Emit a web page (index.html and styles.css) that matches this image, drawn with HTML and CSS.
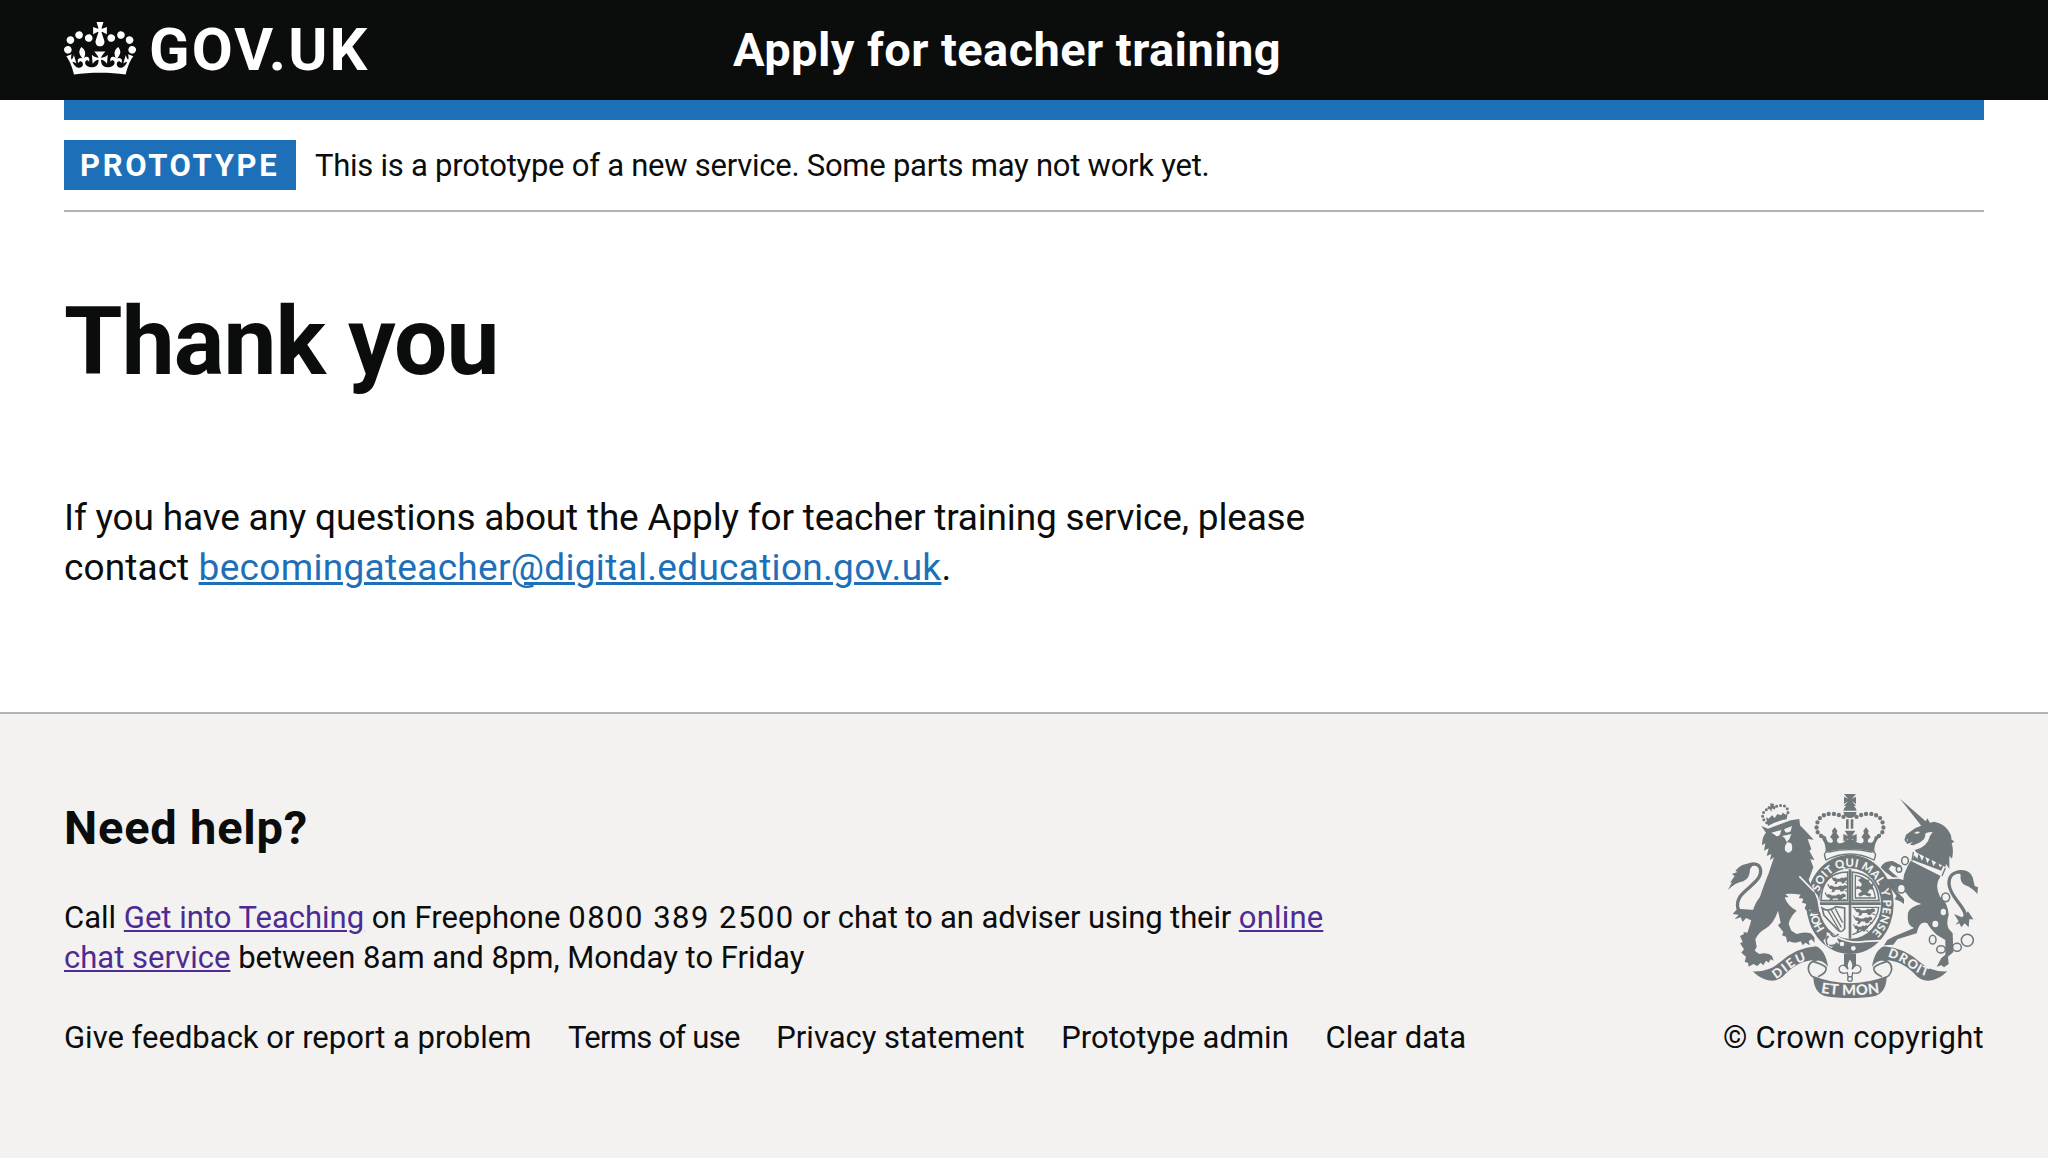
FILE: index.html
```html
<!DOCTYPE html>
<html lang="en">
<head>
<meta charset="utf-8">
<title>Thank you - Apply for teacher training</title>
<link rel="stylesheet" href="styles.css">
</head>
<body>
<header class="header">
  <a class="brand">
    <svg class="brand-crown" viewBox="0 0 132 97" aria-hidden="true"><path fill="currentColor" fill-rule="evenodd" d="M25 30.2c3.5 1.5 7.7-.2 9.1-3.7 1.5-3.6-.2-7.8-3.9-9.2-3.6-1.4-7.6.3-9.1 3.9-1.4 3.5.3 7.5 3.9 9zM9 39.5c3.6 1.5 7.8-.2 9.2-3.7 1.5-3.6-.2-7.8-3.9-9.1-3.6-1.5-7.6.2-9.1 3.8-1.4 3.5.3 7.5 3.8 9zM4.4 57.2c3.5 1.5 7.7-.2 9.1-3.8 1.5-3.6-.2-7.7-3.9-9.1-3.5-1.5-7.6.3-9.1 3.8-1.4 3.5.3 7.6 3.9 9.1zm38.3-21.4c3.5 1.5 7.7-.2 9.1-3.8 1.5-3.6-.2-7.7-3.9-9.1-3.6-1.5-7.6.3-9.1 3.8-1.3 3.6.4 7.7 3.9 9.1zm64.4-5.6c-3.6 1.5-7.8-.2-9.1-3.7-1.5-3.6.2-7.8 3.8-9.2 3.6-1.4 7.7.3 9.2 3.9 1.3 3.5-.4 7.5-3.9 9zm15.9 9.3c-3.6 1.5-7.7-.2-9.1-3.7-1.5-3.6.2-7.8 3.7-9.1 3.6-1.5 7.7.2 9.2 3.8 1.5 3.5-.3 7.5-3.8 9zm4.7 17.7c-3.6 1.5-7.8-.2-9.2-3.8-1.5-3.6.2-7.7 3.9-9.1 3.6-1.5 7.7.3 9.2 3.8 1.3 3.5-.4 7.6-3.9 9.1zM89.3 35.8c-3.6 1.5-7.8-.2-9.2-3.8-1.4-3.6.2-7.7 3.9-9.1 3.6-1.5 7.7.3 9.2 3.8 1.4 3.6-.3 7.7-3.9 9.1zM69.7 17.7l8.9 4.7V9.3l-8.9 2.8c-.2-.3-.5-.6-.9-.9L72.4 0H59.6l3.5 11.2c-.3.3-.6.5-.9.9l-8.8-2.8v13.1l8.8-4.7c.3.3.6.7.9.9l-5 15.4v.1c-.2.8-.4 1.6-.4 2.4 0 4.1 3.1 7.5 7 8.1h.2c.3 0 .7.1 1 .1.4 0 .7 0 1-.1h.2c4-.6 7.1-4.1 7.1-8.1 0-.8-.1-1.7-.4-2.4V34l-5.1-15.4c.4-.2.7-.6 1-.9zM66 92.8c16.9 0 32.8 1.1 47.1 3.2 4-16.9 8.9-26.7 14-33.5l-9.6-3.4c1 4.9 1.1 7.2 0 10.2-1.5-1.4-3-4.3-4.2-8.7L108.6 76c2.8-2 5-3.2 7.5-3.3-4.4 9.4-10 11.9-13.6 11.2-4.3-.8-6.3-4.6-5.6-7.9 1-4.7 5.7-5.9 8-.5 4.3-8.7-3-11.4-7.6-8.8 7.1-7.2 7.9-13.5 2.1-21.1-8 6.1-8.1 12.3-4.5 20.8-4.7-5.4-12.1-2.5-9.5 6.2 3.4-5.2 7.9-2 7.2 3.1-.6 4.3-6.4 7.8-13.5 7.2-10.3-.9-10.9-8-11.2-13.8 2.5-.5 7.1 1.8 11 7.3L80.2 60c-4.1 4.4-8 5.3-12.3 5.4 1.4-4.4 8-11.6 8-11.6H55.5s6.4 7.2 7.9 11.6c-4.2-.1-8-1-12.3-5.4l1.4 16.4c3.9-5.5 8.5-7.7 10.9-7.3-.3 5.8-.9 12.8-11.1 13.8-7.2.6-12.9-2.9-13.5-7.2-.7-5 3.8-8.3 7.1-3.1 2.7-8.7-4.6-11.6-9.4-6.2 3.7-8.5 3.6-14.7-4.6-20.8-5.8 7.6-5 13.9 2.2 21.1-4.7-2.6-11.9.1-7.7 8.8 2.3-5.5 7.1-4.2 8.1.5.7 3.3-1.3 7.1-5.7 7.9-3.5.7-9-1.8-13.5-11.2 2.5.1 4.7 1.3 7.5 3.3l-4.7-15.4c-1.2 4.4-2.7 7.2-4.3 8.7-1.1-3-.9-5.3 0-10.2l-9.5 3.4c5 6.9 9.9 16.7 14 33.5 14.8-2.1 30.8-3.2 47.7-3.2z"/></svg>
    <span class="brand-text">GOV.UK</span>
  </a>
  <a class="service">Apply for teacher training</a>
</header>
<div class="container">
  <div class="blue-bar"></div>
  <div class="phase">
    <strong class="tag">PROTOTYPE</strong>
    <span class="phase-text">This is a prototype of a new service. Some parts may not work yet.</span>
  </div>
  <main class="main">
    <h1 class="title">Thank you</h1>
    <p class="lead"><span class="lead-first">If you have any questions about the Apply for teacher training service, please</span><br><span class="lead-second">contact </span><a class="link">becomingateacher@digital.education.gov.uk</a>.</p>
  </main>
</div>
<footer class="footer">
  <div class="footer-main">
    <h2 class="help">Need help?</h2>
    <p class="help-text">Call <a class="link link-visited link-git">Get into Teaching</a><span class="help-on"> on Freephone </span><span class="help-number">0800 389 2500</span><span class="help-chat"> or chat to an adviser using their </span><a class="link link-visited link-online">online</a><br><a class="link link-visited">chat service</a> between 8am and 8pm, Monday to Friday</p>
    <ul class="links">
      <li class="links-feedback">Give feedback or report a problem</li>
      <li class="links-terms">Terms of use</li>
      <li class="links-privacy">Privacy statement</li>
      <li class="links-admin">Prototype admin</li>
      <li>Clear data</li>
    </ul>
  </div>
  <div class="copyright">
    <svg class="arms" viewBox="84 42 750 612" aria-hidden="true">
      <defs>
        <path id="garter" d="M450 486A99 113 0 0 1 450 260A99 113 0 0 1 450 486"/>
        <path id="motto-l" d="M228 598Q252 582 274 564Q298 544 342 535"/>
        <path id="motto-r" d="M562 530Q600 540 634 566Q656 586 700 594"/>
        <path id="motto-c" d="M360 638Q450 654 545 638"/>
        <g id="charge"><path d="M4 8q10-10 18 0h14q10-8 14-2l8-5q12 4 8 12l-8 4-6 9h-8l-3-7H27l-4 8h-8l2-9-9-3z"/><path class="thin" d="M12 8Q0 6 3-3M22 24l-8 4M58 22l10 4"/></g>
      </defs>
      <!-- ribbon ends and folds -->
      <g id="ribbon" class="ink">
        <path d="M158 574Q206 576 238 548Q290 502 348 499Q376 510 384 560Q368 540 350 542Q328 538 296 552Q270 566 248 590Q228 606 204 601Q180 596 158 574z"/>
        <path class="line" d="M352 538Q324 546 325 568Q330 592 352 596M340 545Q366 552 378 562Q382 578 354 590"/>
        <path d="M340 588Q396 610 451 610V654Q408 654 374 648Q340 636 340 588z"/>
      </g>
      <use href="#ribbon" transform="matrix(-1 0 0 1 900 0)"/>
      <g class="motto">
        <text font-size="38"><textPath href="#motto-l" textLength="108">DIEU</textPath></text>
        <text font-size="38"><textPath href="#motto-r" textLength="134">DROIT</textPath></text>
        <text font-size="44"><textPath href="#motto-c" startOffset="2" textLength="178">ET MON</textPath></text>
      </g>
      <!-- fleur below the garter -->
      <g class="ink"><path d="M432 522H468V560H432z"/></g>
      <path class="leaf" d="M450 536Q464 552 456 568Q470 546 482 562Q486 578 468 580L458 578L456 590H444L442 578L432 580Q414 578 418 562Q430 546 444 568Q436 552 450 536z"/>
      <circle class="leaf" cx="450" cy="597" r="7"/>
      <!-- garter -->
      <g class="ink"><ellipse cx="450" cy="373" rx="131" ry="149"/></g>
      <ellipse class="paper" cx="450" cy="371" rx="93" ry="106"/>
      <path class="hair" d="M410 470Q450 492 496 484L548 482"/>
      <path class="paper" d="M380 456l18 8 18-2-4 16 6 12-14 6-10 8-16-8-8-14 10-12z"/>
      <path class="line" d="M384 496q-12-16 2-28M392 462q10 14 24 0M388 496q16 4 24-8"/>
      <circle class="paper" cx="426" cy="492" r="7"/><circle class="paper" cx="460" cy="505" r="7"/>
      <g class="motto">
        <text font-size="34"><textPath href="#garter" startOffset="88" textLength="70">HON</textPath></text>
        <text font-size="34"><textPath href="#garter" startOffset="204" textLength="236">SOIT QUI MAL</textPath></text>
        <text font-size="34"><textPath href="#garter" startOffset="455" textLength="138">Y PENSE</textPath></text>
      </g>
      <!-- quartered shield -->
      <g class="ink">
        <path d="M446 268h8v208h-8zM358 367h184v8H358z"/>
        <use href="#charge" transform="translate(394 290) scale(.72 .8)"/>
        <use href="#charge" transform="translate(382 314) scale(.9 .8)"/>
        <use href="#charge" transform="translate(374 340) scale(.95 .8)"/>
        <use href="#charge" transform="translate(462 384) scale(.95 .8)"/>
        <use href="#charge" transform="translate(460 409) scale(.85 .8)"/>
        <use href="#charge" transform="translate(460 434) scale(.66 .8)"/>
        <path d="M474 300l14-8 8 8 14-2-6 10 8 6 12-8-6 14 4 10-12-2-8 10 12 4-4 8-18-6-12 6-6-8 12-8-8-8-10 2 2-10 12 2 4-8z"/>
      </g>
      <path class="line" d="M363 362Q364 278 443 276V362zM457 276Q532 284 537 362H457z"/>
      <path class="line thin" d="M466 286Q520 298 526 354H466z"/>
      <path class="line" d="M366 384Q386 398 408 380L434 384V446Q424 462 412 448L372 406z"/>
      <path class="line thin" d="M384 392l34 58M394 390l30 52M406 386l22 42"/>
      <path class="line thin" d="M457 382H536Q530 438 457 464"/>
      <!-- royal crown -->
      <path class="cap" d="M378 240Q366 214 386 216Q450 202 514 216Q534 214 522 240Q450 204 378 240z"/>
      <g class="ink">
        <path d="M432 42h36l-12 14 12-6v22l-12-8 12 14h-36l12-14-12 8V50l12 6z"/>
        <path d="M430 92q4-16 20-16t20 16zM430 96h40q-4 18-20 18t-20-18z"/>
        <path d="M438 118h8v28h-8zM452 118h8v28h-8z"/>
        <path d="M434 152h32l-10 16 14-6v22l-14-6-6 8-6-8-14 6v-22l14 6z"/>
        <path d="M368 176l-10-16 20 10q2 20 16 18 8-2 2-12l-6-4 8-12-2-8 8-10 8 10-2 8 8 12-6 4q-4 14 10 14 12-2 14-10h30q2 8 14 10 14 0 10-14l-6-4 8-12-2-8 8-10 8 10-2 8 8 12-6 4q-6 10 2 12 14 2 16-18l20-10-10 16q-14 20-10 40-74-18-148 0 4-20-10-40z"/>
      </g>
      <path class="dots" d="M363 168Q348 158 350 138Q354 102 396 101Q424 104 438 116M537 168Q552 158 550 138Q546 102 504 101Q476 104 462 116"/>
      <!-- lion -->
      <path class="gap" d="M326 262L304 292L322 316L348 350L360 395"/>
      <g class="ink">
        <path d="M184 138L204 146L272 121L298 117L300 136L314 150L341 179L323 177L334 208L328 212L343 240L331 238L340 262L326 300L340 328L352 360L358 395L352 402L344 396L338 402L330 388L322 396L314 384L320 372L306 368L310 356L296 354L302 344Q280 340 256 342L266 352L254 352Q262 378 290 392Q270 410 266 432L274 452L290 462Q312 454 332 460L343 472L344 488L334 478L326 484L330 496L316 488L308 496L302 484Q284 492 268 484L262 488L258 470L246 466L250 456L234 436L242 428L234 392Q222 430 196 446Q176 456 166 478L170 500L164 512L178 522Q204 516 216 528L221 542L212 538L206 548L198 542L190 556L182 548L172 558L160 552L146 560L144 548L134 546L138 530L124 518L132 508L120 490L128 486L120 468L132 462L130 456L142 458Q150 436 154 420Q156 380 180 350Q190 320 206 280L222 232L210 240L214 222L200 228L206 205L192 212L196 190L186 196Q186 170 198 158z"/>
        <path d="M162 250Q125 248 106 272L112 276L96 282L104 288L90 308L96 306L84 330Q106 308 130 304Q150 296 150 268z"/>
        <path d="M112 386L98 402L116 404L104 418L122 412L128 426L138 414L156 422L164 390z"/>
        <path d="M198 112l8 4 10-10 8 8 8-12 12 4 4-8 10 6 6-8-4 22q-28 4-56 20z"/>
        <path d="M211 70l12 2-3 6 8 1-4 10-8-4-2 10-5-8-7 1 2-10 7 2z"/>
      </g>
      <path class="dots dots-small" d="M200 128L190 118L187 105L193 93L205 85M230 79L244 76L256 79L264 89L264 102"/>
      <path class="line tail" d="M152 406C118 408 102 382 120 350C140 322 190 300 181 266C176 248 155 250 142 258"/>
      <path class="paper" d="M214 158l30-8-4 14q-10 8-14 2zM252 148l24-10-4 16q-10 6-16 2zM246 168l28-6-6 16-8 8-6-12zM262 186l12 4q8 24-8 28-16-2-10-22z"/>
      <path class="hair" d="M298 289L342 334"/>
      <!-- unicorn -->
      <g class="ink">
        <path d="M600 56L684 130L666 140z"/>
        <path d="M613 180L618 164L646 144L672 134L682 115L690 128L702 125Q732 132 742 148Q756 166 754 178L763 185L755 190Q762 212 756 236L748 228L748 266L738 252L736 262L706 246L650 218L644 210Q682 202 690 168L698 156Q670 156 676 168Q672 186 640 196L630 194L638 186L622 192z"/>
        <path d="M632 242L722 288Q702 316 720 350Q744 368 746 404Q738 430 746 446L758 460L760 516L744 530L746 552L732 562L724 556L710 560L724 534L736 524L736 480L710 464Q690 446 682 430Q664 420 654 446L650 460L592 478L580 494L552 496L562 480L580 470L642 444Q618 436 624 398Q630 380 664 372Q634 364 618 338L594 320L590 334L612 356V372L600 364L584 358L590 348L570 322L560 298L596 296L610 300L612 284L622 260z"/>
        <path d="M542 262Q552 242 578 243L606 258L588 262L574 256L566 268L582 282L594 292L578 292L556 276z"/>
        <path d="M770 272Q806 264 818 292L824 318L834 322L832 342Q815 322 796 316Q778 306 782 284z"/>
        <path d="M804 394L820 418L808 418L806 442L794 430L784 442L778 430L766 434L776 424L762 402L786 412z"/>
      </g>
      <path class="line tail" d="M794 418C808 388 750 356 747 312C746 284 764 274 786 276"/>
      <path class="paper" d="M640 214L736 262L724 286L634 240z"/>
      <path class="ink" d="M638 240l4-14 10 10 4-16 10 22 8-18 8 26 10-18 8 26 12-16 8 20 12-10-8 20z"/>
      <path class="line thin" d="M640 216l-4 26M736 264l-10 24"/>
      <g class="paper"><ellipse cx="730" cy="396" rx="8" ry="10"/><ellipse cx="706" cy="432" rx="9" ry="10"/><circle cx="622" cy="180" r="2"/><path d="M642 160q8-8 18-4-4 8-18 4z"/></g>
      <g class="ring"><ellipse cx="615" cy="242" rx="10" ry="12"/><ellipse cx="597" cy="268" rx="8" ry="9"/><ellipse cx="604" cy="326" rx="12" ry="13"/><ellipse cx="737" cy="352" rx="12" ry="13"/><ellipse cx="698" cy="479" rx="10" ry="13"/><ellipse cx="723" cy="508" rx="13" ry="11"/><ellipse cx="771" cy="502" rx="13" ry="12"/><circle cx="802" cy="481" r="18"/></g>
    </svg>
    <span class="copyright-text">© Crown copyright</span>
  </div>
</footer>
</body>
</html>
```
FILE: styles.css
```css
* { box-sizing: border-box; }
body { margin: 0; background: #fff; color: #0b0c0c; font-family: Roboto, "Liberation Sans", sans-serif; font-size: 31px; line-height: 40px; }
h1, h2, p, ul { margin: 0; padding: 0; }

.header { display: grid; grid-template-columns: 669px 1fr; align-items: center; height: 100px; padding: 0 64px; background: #0b0c0c; color: #fff; font-weight: 700; }
.brand { display: flex; align-items: center; gap: 13px; }
.brand-crown { width: 72px; height: 53px; margin-top: -4px; }
.brand-text { font-size: 59.5px; line-height: 70px; letter-spacing: 2.1px; }
.service { font-size: 47px; line-height: 60px; letter-spacing: .42px; }

.container { margin: 0 64px; }
.blue-bar { height: 20px; background: #1d70b8; }
.phase { display: flex; align-items: center; gap: 19px; padding: 20px 0; border-bottom: 2px solid #b1b4b6; }
.tag { width: 232px; height: 50px; padding-left: 16px; background: #1d70b8; color: #fff; line-height: 51px; letter-spacing: 2.65px; }
.phase-text { margin-top: 2px; letter-spacing: -.25px; }

.main { padding: 80px 0 119px; }
.title { margin-bottom: 101px; font-size: 94.5px; line-height: 100px; letter-spacing: -.85px; }
.lead { font-size: 37px; line-height: 50px; }
.lead-first { letter-spacing: -.18px; }
.lead-second { letter-spacing: .1px; }
.link { color: #1d70b8; letter-spacing: .3px; text-decoration: underline 3px; text-underline-offset: 2px; }
.link-visited { color: #4c2c92; letter-spacing: 0; text-decoration-thickness: 2px; }
.link-git { letter-spacing: 0; }
.link-online { letter-spacing: .18px; }

.footer { display: flex; justify-content: space-between; height: 446px; padding: 80px 64px 0; border-top: 2px solid #b1b4b6; background: #f3f2f1; }
.help { margin: 4px 0 40px; font-size: 47px; line-height: 60px; letter-spacing: .8px; }
.help-text { margin-bottom: 40px; }
.help-on { letter-spacing: .05px; }
.help-number { letter-spacing: 1.5px; }
.help-chat { letter-spacing: -.12px; }
.links { display: flex; gap: 36.7px; list-style: none; }
.links-terms { letter-spacing: -.75px; }
.copyright { display: flex; flex-direction: column; align-items: flex-end; gap: 20px; }
.copyright-text { letter-spacing: .26px; }
.arms { width: 250px; height: 204px; margin-right: 6px; }

.ink, #ribbon { fill: #6f777b; }
.paper { fill: #f3f2f1; }
.line, .ring { fill: none; stroke: #6f777b; stroke-width: 5; }
.line.thin, .thin { fill: none; stroke: #6f777b; stroke-width: 4; }
.line.tail { stroke-width: 10; }
.ring { stroke-width: 4.5; fill: #f3f2f1; }
.hair { fill: none; stroke: #f3f2f1; stroke-width: 5; }
.gap { fill: none; stroke: #f3f2f1; stroke-width: 12; }
.leaf { fill: #f3f2f1; stroke: #6f777b; stroke-width: 4; }
.cap { fill: #f3f2f1; stroke: #6f777b; stroke-width: 4; }
.dots { fill: none; stroke: #6f777b; stroke-width: 13; stroke-linecap: round; stroke-dasharray: 0 15; }
.dots-small { stroke-width: 9; stroke-dasharray: 0 12; }
.motto { fill: #f3f2f1; font-family: Lato, sans-serif; font-weight: 900; }
```
